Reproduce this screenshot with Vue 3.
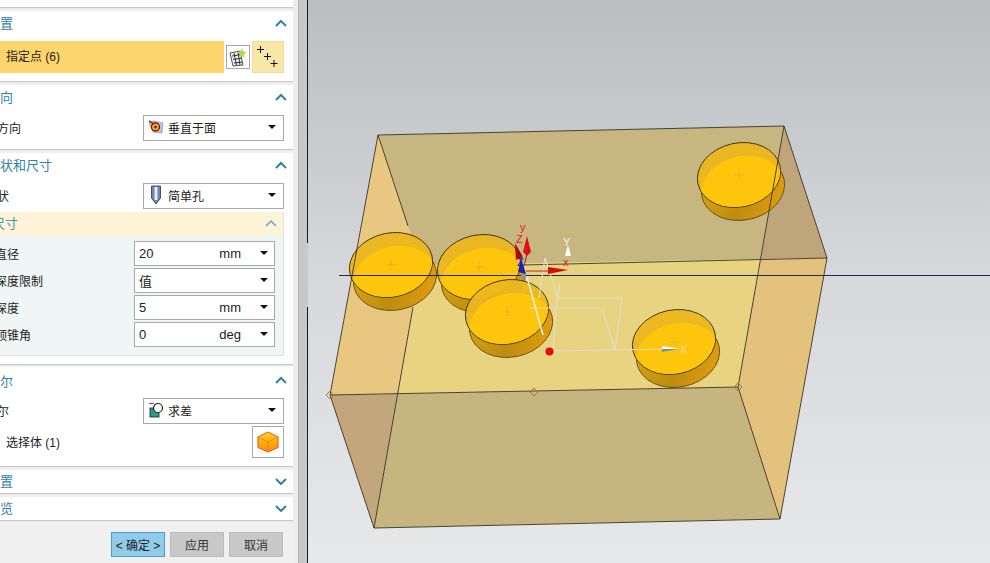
<template>
  <div class="screen">
    <div class="panel">
      <div class="stub"></div>

      <section class="group">
        <header class="group-head"><span>位置</span><svg class="chev" viewBox="0 0 12 8"><polyline points="1,7 6,2 11,7" /></svg></header>
        <div class="row point-row">
          <div class="point-bar">指定点 (6)</div>
          <button class="sketch-btn">
            <svg viewBox="0 0 20 20" width="20" height="20">
              <path d="M2 6 L12 4 L15 18 L5 19 Z" fill="#eef1f1" stroke="#555" stroke-width="1" />
              <path d="M4 9 L13 7.500 M5 12.500 L14 11 M6 16 L14.500 15 M6 6 L8.500 18.500 M10 5 L12 18" stroke="#333" stroke-width="1" fill="none" />
              <path d="M14 1 L15.500 4.500 L19 5 L16 7.500 L17 11 L14 9 L11 11 L12 7.500 L9 5 L12.500 4.500 Z" fill="#bcd65a" />
            </svg>
          </button>
          <button class="plus-btn">
            <svg viewBox="0 0 32 32" width="32" height="32">
              <path d="M5 8.500h7M8.500 5v7M12 15.500h7M15.500 12v7M18.500 22.500h7M22 19v7" stroke="#111" stroke-width="1" fill="none" />
            </svg>
          </button>
        </div>
      </section>

      <section class="group">
        <header class="group-head"><span>方向</span><svg class="chev" viewBox="0 0 12 8"><polyline points="1,7 6,2 11,7" /></svg></header>
        <div class="row field-row">
          <label>孔方向</label>
          <div class="select">
            <svg viewBox="0 0 16 14" width="16" height="14">
              <path d="M1 3 L6 1 L15 3 L14 13 L5 12 Z" fill="#b9c8e0" stroke="#7788aa" stroke-width="0.6" />
              <circle cx="7.500" cy="7" r="4" fill="#e3c820" stroke="#8a1010" stroke-width="1.400" />
              <circle cx="7.500" cy="7" r="1.500" fill="#a01010" />
              <path d="M1 1 L6 4" stroke="#c01818" stroke-width="1.500" />
            </svg>
            <span>垂直于面</span>
            <i class="caret"></i>
          </div>
        </div>
      </section>

      <section class="group dims">
        <header class="group-head"><span>形状和尺寸</span><svg class="chev" viewBox="0 0 12 8"><polyline points="1,7 6,2 11,7" /></svg></header>
        <div class="row field-row">
          <label>形状</label>
          <div class="select">
            <svg viewBox="0 0 16 20" width="16" height="20">
              <path d="M3.500 1 H12.500 V13 L8 19 L3.500 13 Z" fill="#6f84aa" stroke="#3f5278" stroke-width="1" />
              <path d="M8 2 V15" stroke="#e6ecf4" stroke-width="3" />
            </svg>
            <span>简单孔</span>
            <i class="caret"></i>
          </div>
        </div>
        <div class="sub">
          <header class="sub-head"><span>尺寸</span><svg class="chev small" viewBox="0 0 12 8"><polyline points="1,7 6,2 11,7" /></svg></header>
          <div class="sub-body">
            <div v-for="d in dims" :key="d.label" class="dim-row">
              <label>{{ d.label }}</label>
              <div class="input">
                <span class="val">{{ d.value }}</span>
                <span class="unit">{{ d.unit }}</span>
                <i class="caret"></i>
              </div>
            </div>
          </div>
        </div>
      </section>

      <section class="group bool">
        <header class="group-head"><span>布尔</span><svg class="chev" viewBox="0 0 12 8"><polyline points="1,7 6,2 11,7" /></svg></header>
        <div class="row field-row">
          <label>布尔</label>
          <div class="select">
            <svg viewBox="0 0 16 16" width="16" height="16">
              <path d="M1 1.500h5" stroke="#c02040" stroke-width="1" />
              <rect x="2" y="6" width="9" height="9" fill="#2f9a8c" stroke="#123" stroke-width="0.8" />
              <circle cx="10" cy="6" r="4.500" fill="#fff" stroke="#222" stroke-width="1.200" />
            </svg>
            <span>求差</span>
            <i class="caret"></i>
          </div>
        </div>
        <div class="row body-row">
          <div class="body-label">选择体 (1)</div>
          <button class="cube-btn">
            <svg viewBox="0 0 24 24" width="22" height="22">
              <defs>
                <linearGradient id="cubeFill" x1="0" y1="0" x2="0" y2="1">
                  <stop offset="0" stop-color="#ffd21a" />
                  <stop offset="1" stop-color="#fb8a0c" />
                </linearGradient>
              </defs>
              <path d="M12 1 L23 6.500 V18 L12 23 L1 18 V6.500 Z" fill="url(#cubeFill)" stroke="#e0501a" stroke-width="1" />
              <path d="M1 6.500 L12 12 L23 6.500 M12 12 V23" fill="none" stroke="#e8701a" stroke-width="0.8" />
            </svg>
          </button>
        </div>
      </section>

      <section class="group closed">
        <header class="group-head"><span>设置</span><svg class="chev" viewBox="0 0 12 8"><polyline points="1,2 6,7 11,2" /></svg></header>
      </section>
      <section class="group closed">
        <header class="group-head"><span>预览</span><svg class="chev" viewBox="0 0 12 8"><polyline points="1,2 6,7 11,2" /></svg></header>
      </section>

      <footer class="actions">
        <button class="primary">&lt; 确定 &gt;</button>
        <button>应用</button>
        <button>取消</button>
      </footer>
    </div>

    <div class="divider"></div>

    <div class="viewport">
      <svg class="scene" viewBox="308 0 682 563" width="682" height="563">
        <defs>
          <linearGradient id="sideFill" x1="0" y1="0.2" x2="1" y2="0.6">
            <stop offset="0" stop-color="#d8a412" />
            <stop offset="0.55" stop-color="#bd8c10" />
            <stop offset="1" stop-color="#e09c0e" />
          </linearGradient>
          <clipPath id="innerClip">
            <ellipse cx="4" cy="13" rx="42" ry="32" transform="rotate(-12 4 13)" />
          </clipPath>
        </defs>

        <!-- box faces -->
        <polygon points="378,135 784,126 761,259 421,265" fill="#c8b680" />
        <polygon points="784,126 827,258 761,259" fill="#bfa67a" />
        <polygon points="378,135 421,265 398,394 330,395" fill="#e8c880" />
        <polygon points="421,265 761,259 738,387 398,394" fill="#e8d480" />
        <polygon points="761,259 827,258 780,519 738,387" fill="#e2c27c" />
        <polygon points="330,395 398,394 374,528" fill="#c2a77c" />
        <polygon points="398,394 738,387 780,519 374,528" fill="#c7b57f" />

        <!-- pockets -->
        <g v-for="(p, i) in pockets" :key="i" :transform="`translate(${p[0]} ${p[1]})`">
          <ellipse cx="4" cy="13" rx="42" ry="32" transform="rotate(-12 4 13)" fill="url(#sideFill)" stroke="#5a4310" stroke-width="0.8" />
          <ellipse cx="0" cy="0" rx="42" ry="32" transform="rotate(-12)" fill="#ebb71f" fill-opacity="0.95" stroke="#3f3210" stroke-width="0.9" />
          <g clip-path="url(#innerClip)">
            <ellipse cx="0" cy="0" rx="41.500" ry="31.500" transform="rotate(-12)" fill="#fdc50c" />
          </g>
          <path d="M-5 0h10M0 -5v10" stroke="#e8a830" stroke-opacity="0.7" stroke-width="1" />
        </g>

        <!-- box edges -->
        <g fill="none" stroke="#3a3426" stroke-width="0.9">
          <polygon points="378,135 784,126 827,258 780,519 374,528 330,395" />
          <line x1="378" y1="135" x2="408" y2="226" />
          <line x1="523" y1="265" x2="827" y2="258" />
          <line x1="784" y1="126" x2="738" y2="387" />
          <line x1="330" y1="395" x2="738" y2="387" />
          <line x1="738" y1="387" x2="780" y2="519" />
          <line x1="413" y1="307" x2="374" y2="528" />
        </g>

        <line x1="339" y1="275.500" x2="990" y2="275.500" stroke="#1c2a48" stroke-width="1" />

        <!-- wireframe preview -->
        <g fill="none" stroke="#e2dec4" stroke-width="1.200">
          <path d="M558 298 H622 L615 350 L602 308 H530" />
          <path d="M545 258 L558 298 L556 308 L553 351 M545 258 L539 298 M558 298 L560 282" />
          <path d="M553 351 L673 349" />
          <path d="M527 277 L543 335" stroke="#eeeee0" stroke-width="1.500" />
        </g>

        <!-- handles -->
        <path d="M527 236 L531 252 L527 256 L523 252 Z" fill="#e01010" />
        <path d="M515 243 L523 257 L516 260 Z" fill="#a80808" />
        <line x1="527" y1="254" x2="524" y2="266" stroke="#a02020" />
        <path d="M548 267 L568 270 L548 274 Z" fill="#d80a0a" />
        <line x1="526" y1="271" x2="550" y2="271" stroke="#b02828" />
        <path d="M521 258 L526 274 L518 272 Z" fill="#2020b0" />
        <rect x="521" y="274" width="5" height="5" fill="#8c949c" />
        <circle cx="549.500" cy="351.500" r="4" fill="#e80a0a" />
        <path d="M568 245 L571 256 L565 256 Z" fill="#fff" />
        <path d="M662 346 L680 349 L662 352 Z" fill="#fff" />
        <path d="M662 349 L680 349 L662 352 Z" fill="#7f8a8a" />
        <text class="axis" x="520" y="231" fill="#e02020">y</text>
        <text class="axis" x="516" y="243" fill="#e02020">Z</text>
        <text class="axis" x="517" y="266" fill="#2020c0">Z</text>
        <text class="axis" x="563" y="246" fill="#eeeeee">Y</text>
        <text class="axis" x="563" y="266" fill="#e02020">x</text>
        <text class="axis" x="680" y="353" fill="#e8dcb0">X</text>

        <!-- handle diamonds -->
        <path v-for="(h, i) in handles" :key="i" :transform="`translate(${h[0]} ${h[1]})`" d="M-4 0 L0 -4 L4 0 L0 4 Z" fill="none" stroke="#a87438" stroke-width="1" />
      </svg>
    </div>
  </div>
</template>

<script setup>
const dims = [
  { label: '孔直径', value: '20', unit: 'mm' },
  { label: '孔深度限制', value: '值', unit: '' },
  { label: '孔深度', value: '5', unit: 'mm' },
  { label: '孔顶锥角', value: '0', unit: 'deg' }
]

const pockets = [
  [391, 265],
  [479, 267],
  [507, 312],
  [739, 175],
  [674, 342]
]

const handles = [
  [330, 395],
  [534, 392],
  [738, 387]
]
</script>

<style scoped>
.screen {
  width: 990px;
  height: 563px;
  display: flex;
  overflow: hidden;
  background: #f0f0f0;
  font-family: "Liberation Sans", "Noto Sans CJK SC", sans-serif;
  font-size: 12px;
  color: #222;
}

.panel {
  flex: none;
  width: 307px;
  margin-left: -14px;
  display: flex;
  flex-direction: column;
}

.stub {
  height: 7px;
  background: #fff;
  box-shadow: 0 1px 1px #c8c8c8;
  margin-bottom: 4px;
}

.group {
  background: #fff;
  box-shadow: 0 1px 1px #c8c8c8;
  margin-bottom: 4px;
}

.group-head {
  height: 25px;
  box-sizing: border-box;
  padding: 0 6px 2px 1px;
  display: flex;
  align-items: center;
  justify-content: space-between;
  font-size: 13px;
  color: #2f83a8;
}

.chev {
  width: 12px;
  height: 8px;
  fill: none;
  stroke: #2f83a8;
  stroke-width: 2;
}

.chev.small {
  stroke: #6aa6bd;
  stroke-width: 1.500;
}

.row {
  display: flex;
  align-items: center;
}

.point-row {
  height: 32px;
  margin-top: 5px;
  margin-bottom: 8px;
}

.point-bar {
  width: 238px;
  height: 32px;
  line-height: 32px;
  padding-left: 20px;
  box-sizing: border-box;
  background: #fcd56c;
}

.sketch-btn {
  width: 24px;
  height: 24px;
  margin-left: 2px;
  padding: 1px;
  background: #fff;
  border: 1px solid #a8a8a8;
  box-sizing: border-box;
}

.plus-btn {
  width: 32px;
  height: 32px;
  margin-left: 2px;
  padding: 0;
  background: #fbe6aa;
  border: 1px solid #f3dc98;
  box-sizing: border-box;
}

.plus-btn svg {
  display: block;
  margin: -1px;
}

.field-row {
  justify-content: space-between;
  height: 26px;
  margin-top: 5px;
  padding-right: 9px;
  padding-bottom: 8px;
}

.field-row label {
  margin-left: -1px;
  padding-bottom: 2px;
}

.select {
  width: 141px;
  height: 26px;
  display: flex;
  align-items: center;
  gap: 4px;
  padding: 0 4px 2px;
  box-sizing: border-box;
  background: #fff;
  border: 1px solid #a8a8a8;
}

.select svg {
  flex: none;
}

.caret {
  width: 0;
  height: 0;
  margin-left: auto;
  margin-right: 3px;
  border-left: 4px solid transparent;
  border-right: 4px solid transparent;
  border-top: 4px solid #111;
}

.dims .field-row {
  padding-bottom: 3px;
}

.sub {
  margin-right: 9px;
  margin-bottom: 8px;
  border-right: 1px solid #dde3e0;
}

.sub-head {
  height: 24px;
  box-sizing: border-box;
  display: flex;
  align-items: center;
  justify-content: space-between;
  padding: 0 6px 3px 6px;
  background: #fdf3d9;
  color: #4b94b0;
  font-size: 13px;
}

.sub-body {
  background: #f0f5f6;
  border-bottom: 1px solid #dde3e0;
  padding: 5px 8px 8px 0;
  display: flex;
  flex-direction: column;
  gap: 2px;
}

.dim-row {
  display: flex;
  align-items: center;
  justify-content: space-between;
}

.dim-row label {
  white-space: nowrap;
  margin-left: -3px;
  padding-bottom: 1px;
}

.input {
  width: 141px;
  height: 25px;
  display: flex;
  align-items: center;
  padding: 0 4px 1px 4px;
  box-sizing: border-box;
  background: #fff;
  border: 1px solid #a8a8a8;
}

.val {
  flex: 1;
  font-size: 13px;
}

.unit {
  font-size: 13px;
  margin-right: 19px;
}

.input .caret {
  margin-left: 0;
  margin-right: 2px;
}

.dims {
  margin-bottom: 3px;
}

.bool .group-head {
  height: 28px;
}

.bool .field-row {
  margin-top: 3px;
  padding-bottom: 2px;
}

.body-row {
  justify-content: space-between;
  height: 32px;
  padding: 0 9px 8px 20px;
}

.body-label {
  padding-bottom: 2px;
}

.cube-btn {
  width: 32px;
  height: 32px;
  padding: 4px;
  background: #fff;
  border: 1px solid #a8a8a8;
  box-sizing: border-box;
}

.cube-btn svg {
  display: block;
}

.closed,
.closed .group-head {
  height: 23px;
}

.actions {
  display: flex;
  justify-content: flex-end;
  gap: 5px;
  margin-top: 8px;
  padding-right: 10px;
}

.actions button {
  width: 54px;
  height: 25px;
  padding: 0;
  font: inherit;
  color: #333;
  background: #c8c8c8;
  border: 1px solid #bcbcbc;
}

.actions button.primary {
  background: #90cbea;
  border-color: #4b9fc8;
  color: #222;
}

.divider {
  flex: none;
  width: 15px;
  background:
    linear-gradient(180deg, #1a1a1a 0 243px, transparent 243px 307px, #1a1a1a 307px) 14px 0 / 1px 100% no-repeat,
    linear-gradient(90deg, #ededed 0 5px, #b4b4b4 5px 6px, #c8c8c8 6px 15px);
}

.viewport {
  flex: none;
  width: 682px;
  height: 563px;
  background: linear-gradient(180deg, #bbbec1 0%, #d6d8db 50%, #e6e8ea 100%);
}

.scene {
  display: block;
}

.axis {
  font-family: "Liberation Sans", sans-serif;
  font-size: 11px;
}
</style>
<style>
html, body {
  margin: 0;
  background: #f0f0f0;
}
</style>
